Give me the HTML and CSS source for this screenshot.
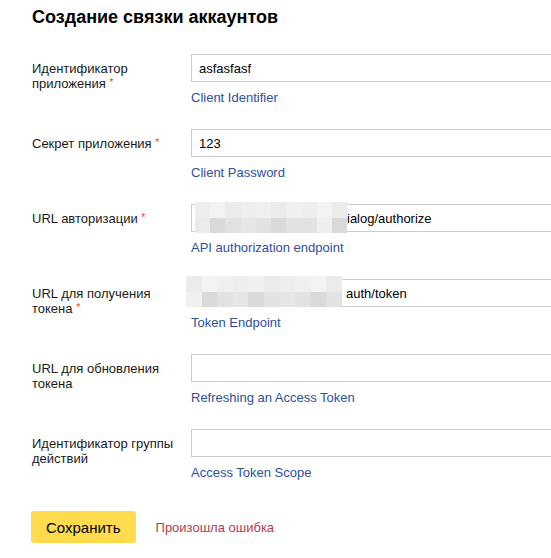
FILE: index.html
```html
<!DOCTYPE html>
<html lang="ru">
<head>
<meta charset="utf-8">
<title>Создание связки аккаунтов</title>
<link rel="stylesheet" href="styles.css">
</head>
<body>
<div class="page">
  <h1 class="title">Создание связки аккаунтов</h1>
  <form class="form">
    <div class="row">
      <label class="row__label">Идентификатор приложения&nbsp;<span class="req">*</span></label>
      <div class="row__field">
        <input class="input" type="text" value="asfasfasf">
        <a class="hint" href="#">Client Identifier</a>
      </div>
    </div>
    <div class="row">
      <label class="row__label">Секрет приложения&nbsp;<span class="req">*</span></label>
      <div class="row__field">
        <input class="input" type="text" value="123">
        <a class="hint" href="#">Client Password</a>
      </div>
    </div>
    <div class="row">
      <label class="row__label">URL авторизации&nbsp;<span class="req">*</span></label>
      <div class="row__field">
        <div class="masked">
          <input class="input input--auth" type="text" value="ialog/authorize">
          <div class="mosaic mosaic--auth">
            <i class="c2"></i><i class="c1"></i><i class="c3"></i><i class="c2"></i><i class="c4"></i><i class="c3"></i><i class="c4"></i><i class="c2"></i><i class="c1"></i><i class="c3"></i>
            <i class="c3"></i><i class="c6"></i><i class="c5"></i><i class="c7"></i><i class="c5"></i><i class="c6"></i><i class="c5"></i><i class="c5"></i><i class="c2"></i><i class="c6"></i>
          </div>
        </div>
        <a class="hint" href="#">API authorization endpoint</a>
      </div>
    </div>
    <div class="row">
      <label class="row__label">URL для получения токена&nbsp;<span class="req">*</span></label>
      <div class="row__field">
        <div class="masked">
          <input class="input input--token" type="text" value="auth/token">
          <div class="mosaic mosaic--token">
            <i class="c3"></i><i class="c1"></i><i class="c4"></i><i class="c2"></i><i class="c4"></i><i class="c3"></i><i class="c2"></i><i class="c4"></i><i class="c1"></i><i class="c3"></i>
            <i class="c4"></i><i class="c6"></i><i class="c5"></i><i class="c7"></i><i class="c6"></i><i class="c5"></i><i class="c7"></i><i class="c5"></i><i class="c6"></i><i class="c5"></i>
          </div>
        </div>
        <a class="hint" href="#">Token Endpoint</a>
      </div>
    </div>
    <div class="row">
      <label class="row__label">URL для обновления токена</label>
      <div class="row__field">
        <input class="input" type="text" value="">
        <a class="hint" href="#">Refreshing an Access Token</a>
      </div>
    </div>
    <div class="row">
      <label class="row__label">Идентификатор группы действий</label>
      <div class="row__field">
        <input class="input" type="text" value="">
        <a class="hint" href="#">Access Token Scope</a>
      </div>
    </div>
    <div class="actions">
      <button class="button" type="button">Сохранить</button>
      <span class="error">Произошла ошибка</span>
    </div>
  </form>
</div>
</body>
</html>
```
FILE: styles.css
```css
html, body {
  margin: 0;
  padding: 0;
  background: #fff;
}
body {
  font-family: "Liberation Sans", Arial, sans-serif;
  color: #1a1a1a;
  font-size: 13px;
}
.page {
  padding: 6px 0 0 32px;
  overflow: hidden;
}
.title {
  margin: 0;
  font-size: 18px;
  line-height: 22px;
  font-weight: bold;
  color: #000;
}
.form {
  margin-top: 26px;
}
.row {
  display: grid;
  grid-template-columns: 159px 1fr;
  margin-bottom: 24px;
}
.row__label {
  padding-top: 7px;
  line-height: 15px;
  padding-right: 8px;
}
.req {
  color: #f33;
  font-size: 10px;
  line-height: 10px;
  vertical-align: 2px;
}
.row__field {
  display: flex;
  flex-direction: column;
  align-items: flex-start;
  margin-right: -30px;
}
.masked {
  position: relative;
  width: 100%;
}
.input {
  box-sizing: border-box;
  width: 100%;
  height: 28px;
  margin: 0;
  padding: 0 7px;
  border: 1px solid #ccc;
  border-radius: 0;
  font-family: "Liberation Sans", Arial, sans-serif;
  font-size: 13px;
  color: #000;
  background: #fff;
  outline: none;
}
.input--auth {
  text-indent: 148px;
}
.input--token {
  text-indent: 147px;
}
.mosaic {
  position: absolute;
  display: grid;
  grid-template-columns: repeat(10, 1fr);
  grid-template-rows: 1fr 1fr;
}
.mosaic--auth {
  left: 4px;
  top: -2px;
  width: 152px;
  height: 31px;
}
.mosaic--token {
  left: -5px;
  top: -3px;
  width: 156px;
  height: 31px;
}
.c1 { background: #f3f3f3; }
.c2 { background: #eeeeee; }
.c3 { background: #ebebeb; }
.c4 { background: #f0f0f0; }
.c5 { background: #e2e2e2; }
.c6 { background: #d9d9d9; }
.c7 { background: #e6e6e6; }
.hint {
  margin-top: 8px;
  line-height: 15px;
  color: #2e4f9e;
  text-decoration: none;
}
.actions {
  display: flex;
  align-items: center;
  gap: 20px;
  margin-top: 31px;
}
.button {
  height: 32px;
  margin-left: -1px;
  padding: 0 15px;
  border: none;
  border-radius: 3px;
  background: #ffdb4d;
  font-family: "Liberation Sans", Arial, sans-serif;
  font-size: 15px;
  color: #000;
}
.error {
  color: #b83b50;
  font-size: 13px;
}
```
